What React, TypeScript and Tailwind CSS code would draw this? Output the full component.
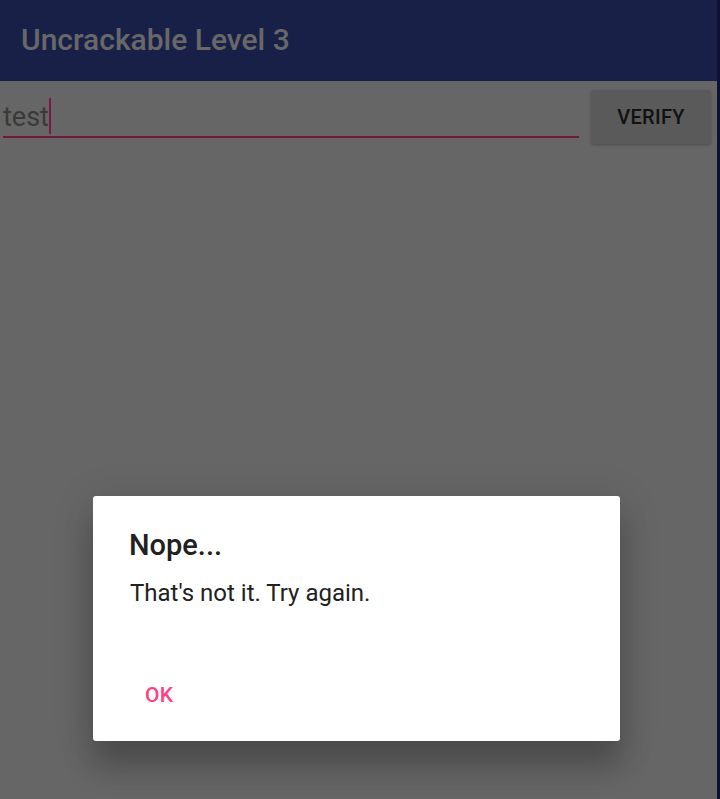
import React from "react";

export default function App() {
  return (
    <div className="w-[720px] h-[799px] flex overflow-hidden" style={{ fontFamily: "Roboto, 'Noto Sans', sans-serif" }}>
      <div className="w-[717px] h-full flex flex-col bg-[#666666] relative">
        <div className="h-[81px] bg-[#192048] flex items-center pl-[21px] pb-[2px] shrink-0">
          <span className="text-[30px] font-medium text-[#686868] leading-none">Uncrackable Level 3</span>
        </div>
        <div className="flex items-start pt-[9px]">
          <div className="ml-[3px] w-[576px] h-[48px] border-b-2 border-[#6e1a3c] flex items-center">
            <span className="text-[27px] text-[#3a3a3a] leading-none pt-[8px]">test</span>
            <span className="w-[2px] h-[36px] bg-[#7a1a42] mt-[6px]"></span>
          </div>
          <div className="ml-[12px] w-[120px] h-[54px] rounded-[3px] bg-[#5a5a5a] shadow-[0_1px_3px_rgba(0,0,0,0.25)] flex items-center justify-center">
            <span className="text-[20px] font-medium text-[#111111] tracking-[0.3px]">VERIFY</span>
          </div>
        </div>
        <div className="absolute left-[93px] top-[496px] w-[527px] h-[245px] bg-white rounded-[3px] shadow-[0_26px_30px_0_rgba(0,0,0,0.22),0_6px_40px_4px_rgba(0,0,0,0.1)] flex flex-col">
          <div className="pl-[36px] pt-[31px] text-[29px] font-medium text-[#212121] leading-[36px]">Nope...</div>
          <div className="pl-[37px] pt-[15px] text-[24px] text-[#212121] leading-[30px]">That's not it. Try again.</div>
          <div className="pl-[52px] pt-[74px] text-[21px] font-medium text-[#ff4081] tracking-[0.3px] leading-[26px]">OK</div>
        </div>
      </div>
      <div className="w-[3px] h-full bg-[#0f1035]"></div>
    </div>
  );
}
